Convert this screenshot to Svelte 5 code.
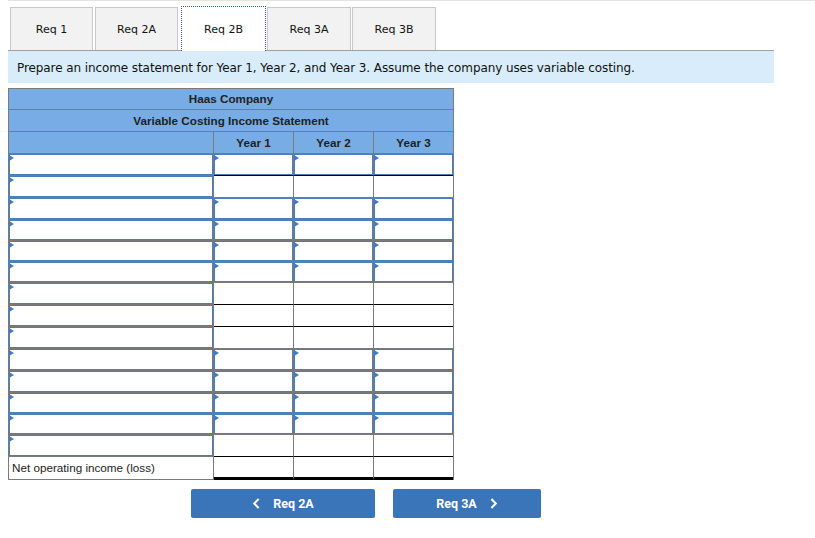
<script>
  const tabs = ['Req 1', 'Req 2A', 'Req 2B', 'Req 3A', 'Req 3B'];
  const years = ['Year 1', 'Year 2', 'Year 3'];
  // inp: amount columns are input cells; black: amount cells have a black bottom rule; h: row height
  const rows = [
    { inp: true, black: true, h: 22 },
    { inp: false, black: false, h: 22 },
    { inp: true, black: false, h: 22 },
    { inp: true, black: false, h: 21 },
    { inp: true, black: false, h: 21 },
    { inp: true, black: false, h: 21 },
    { inp: false, black: true, h: 22 },
    { inp: false, black: true, h: 22 },
    { inp: false, black: false, h: 22 },
    { inp: true, black: false, h: 22 },
    { inp: true, black: false, h: 22 },
    { inp: true, black: false, h: 21 },
    { inp: true, black: false, h: 21 },
    { inp: false, black: true, h: 22 }
  ];
</script>

<div class="page">
  <div class="topline"></div>
  <div class="tabs">
    {#each tabs as t, i}
      <div class="tab" class:active={i === 2}>{t}</div>
    {/each}
  </div>
  <div class="band">Prepare an income statement for Year 1, Year 2, and Year 3. Assume the company uses variable costing.</div>

  <div class="sheet">
    <div class="head title first">Haas Company</div>
    <div class="head title">Variable Costing Income Statement</div>
    <div class="yearrow">
      <div class="head blank"></div>
      {#each years as y}
        <div class="head year">{y}</div>
      {/each}
    </div>
    {#each rows as r}
      <div class="row" style="height: {r.h}px">
        <div class="cell label input"><span class="mark"></span></div>
        {#each years as y}
          <div class="cell amount" class:input={r.inp} class:black={r.black}>
            {#if r.inp}<span class="mark"></span>{/if}
          </div>
        {/each}
      </div>
    {/each}
    <div class="row last">
      <div class="cell label net">Net operating income (loss)</div>
      {#each years as y}
        <div class="cell amount total"></div>
      {/each}
    </div>
  </div>

  <div class="nav">
    <button class="btn prev">
      <svg width="8" height="11" viewBox="0 0 8 11"><path d="M6.6 1 L2.2 5.5 L6.6 10" fill="none" stroke="#fff" stroke-width="2"/></svg>
      <span>Req 2A</span>
    </button>
    <button class="btn next">
      <span>Req 3A</span>
      <svg width="8" height="11" viewBox="0 0 8 11"><path d="M1.4 1 L5.8 5.5 L1.4 10" fill="none" stroke="#fff" stroke-width="2"/></svg>
    </button>
  </div>
</div>

<style>
  :global(body) { margin: 0; background: #fff; }
  .page { width: 815px; height: 538px; overflow: hidden; position: relative; }
  .topline { height: 1px; margin-left: 8px; background: #e3e3e3; }
  .tabs {
    display: flex; margin: 6px 41px 0 8px; padding-left: 2px;
    height: 43px; border-bottom: 1px solid #a0a0a0; gap: 2px;
  }
  .tab {
    width: 83px; height: 43px; box-sizing: border-box;
    border: 1px solid #c8c8c8; border-bottom: 0; background: #f2f2f2;
    font: 11px "DejaVu Sans", sans-serif; color: #111;
    display: flex; align-items: center; justify-content: center;
  }
  .tab:nth-child(4), .tab:nth-child(5) { margin-left: -1px; width: 84px; }
  .tab.active {
    width: 85px; margin-left: 1px; background: #fff;
    border: 1px dotted #2f5f9e; border-bottom: 0;
    height: 45px; margin-top: -1px;
    position: relative;
  }
  .band {
    margin: 0 41px 0 8px; height: 32px; padding-left: 9px;
    background: #d9ecfa; color: #111;
    font: 12px/34px "DejaVu Sans", sans-serif;
    letter-spacing: -0.09px;
  }
  .sheet {
    margin: 5px 0 0 8px; width: 446px; box-sizing: border-box;
    border: 1px solid #7a7a7a; border-bottom: 0;
    font-family: "Liberation Sans", sans-serif; font-size: 11.7px; color: #222;
  }
  .head { background: #78ace5; font-weight: bold; text-align: center; }
  .title { height: 21px; line-height: 21px; border-bottom: 1px solid #7a7a7a; }
  .title.first { height: 20px; line-height: 20px; }
  .yearrow { display: grid; grid-template-columns: 205px 80px 80px 79px; height: 22px; }
  .yearrow .head { box-sizing: border-box; border-right: 1px solid #7a7a7a; line-height: 21px; border-bottom: 1px solid #7a7a7a; }
  .yearrow .head:last-child { border-right: 0; }
  .row { display: grid; grid-template-columns: 205px 80px 80px 79px; }
  .row.last { height: 23px; }
  .cell { position: relative; box-sizing: border-box; border-right: 1px solid #7a7a7a; border-bottom: 1px solid #7a7a7a; background: #fff; }
  .cell:last-child { border-right: 0; }
  .input { box-shadow: inset 0 0 0 1px #4a7ebb; }
  .amount.input { box-shadow: inset 0 0 0 1px #4a7ebb; }
  .amount.input:last-child { box-shadow: inset 1px 1px 0 #4a7ebb, inset -1px -1px 0 #4a7ebb; }
  .black { border-bottom-color: #000; }
  .mark {
    position: absolute; left: 0; top: 1px; width: 0; height: 0;
    border-left: 5px solid #3f7cc4; border-top: 3px solid transparent; border-bottom: 3px solid transparent;
  }
  .net {
    line-height: 21px; padding-left: 3px; color: #222;
    border-bottom: 1px solid #7a7a7a;
  }
  .total { border-bottom: 3px solid #000; }
  .nav { display: flex; margin: 9px 0 0 191px; gap: 18px; }
  .btn {
    height: 29px; border: 0; border-radius: 2px; background: #3a75b9; color: #fff;
    font: bold 12.5px "Roboto", "Liberation Sans", sans-serif;
    display: flex; align-items: center; justify-content: center; padding: 0 0 1px;
  }
  .prev { width: 184px; gap: 13px; }
  .next { width: 148px; gap: 13px; }
</style>
